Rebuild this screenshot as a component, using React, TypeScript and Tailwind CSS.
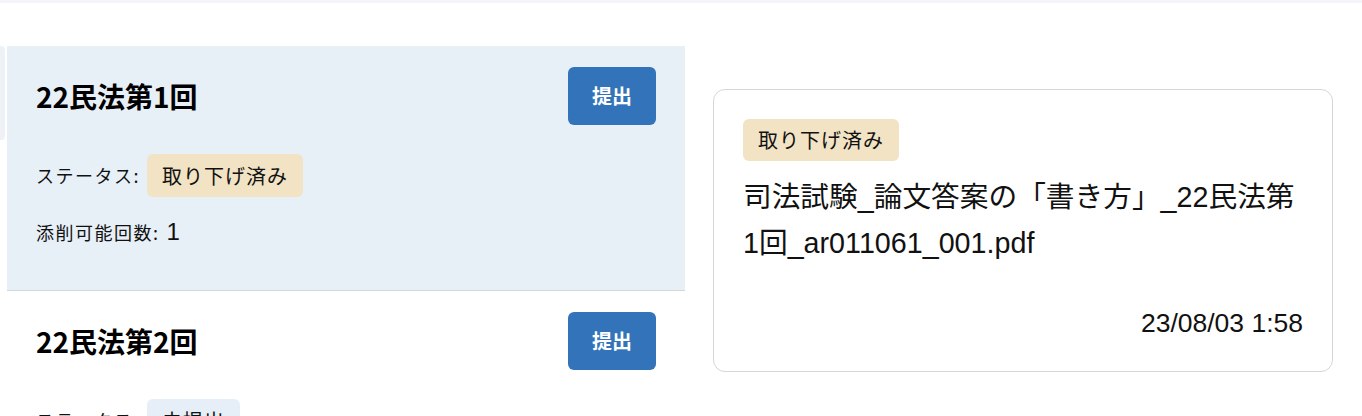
const jp = "font-['Noto_Sans_CJK_JP',sans-serif]";
const mixed = "font-['Liberation_Sans','Noto_Sans_CJK_JP',sans-serif]";

type Item = {
  title: string;
  status: string;
  badge: string;
  count?: number;
  active?: boolean;
};

const items: Item[] = [
  { title: "22民法第1回", status: "取り下げ済み", badge: "bg-[#f1e3c4]", count: 1, active: true },
  { title: "22民法第2回", status: "未提出", badge: "bg-[#e6eef7]", count: 1 },
];

function Row({ item }: { item: Item }) {
  return (
    <div className={`pl-[29px] pr-[29px] pt-[21px] pb-[40px] border-b border-[#d3d6da] ${item.active ? "bg-[#e7eff7]" : "bg-white"}`}>
      <div className="flex items-center justify-between">
        <h2 className={`${jp} text-[28px] font-bold text-black`}>{item.title}</h2>
        <button className={`${jp} w-[88px] h-[58px] rounded-[6px] bg-[#3273b9] text-white text-[20px] font-bold`}>提出</button>
      </div>
      <div className="mt-[29px] flex items-center">
        <span className={`${jp} text-[18px] tracking-[1.5px] text-[#111] mr-[7px]`}>ステータス:</span>
        <span className={`${jp} ${item.badge} rounded-[6px] h-[43px] px-[15px] flex items-center text-[20px] tracking-[1px] text-[#111]`}>{item.status}</span>
      </div>
      <div className="mt-[17px] flex items-baseline">
        <span className={`${jp} text-[18px] tracking-[1.5px] text-[#111]`}>添削可能回数:</span>
        <span className={`${mixed} text-[24px] text-[#111] ml-[7px]`}>{item.count}</span>
      </div>
    </div>
  );
}

export default function App() {
  return (
    <div className="w-[1362px] h-[416px] overflow-hidden bg-white">
      <div className="h-[3px] bg-[#f3f5f8]" />
      <div className="flex pt-[43px]">
        <div className="w-[7px] shrink-0">
          <div className="h-[94px] w-[5px] rounded-r-[4px] bg-[#eef2f7]" />
        </div>
        <div className="w-[678px] shrink-0">
          {items.map((it) => (
            <Row key={it.title} item={it} />
          ))}
        </div>
        <div className="ml-[28px] mt-[43px] w-[620px] h-[283px] rounded-[12px] border border-[#d6d6d6] px-[29px] pt-[29px] flex flex-col">
          <span className={`${jp} self-start bg-[#f1e3c4] rounded-[6px] h-[42px] px-[15px] flex items-center text-[20px] tracking-[1px] text-[#111]`}>取り下げ済み</span>
          <p className={`${mixed} mt-[13px] max-w-[558px] text-[28.7px] leading-[46px] text-[#111]`}>
            司法試験_論文答案の「書き方」_22民法第1回_ar011061_001.pdf
          </p>
          <div className={`${mixed} mt-auto mb-[27px] text-right text-[26.5px] text-[#111]`}>23/08/03 1:58</div>
        </div>
      </div>
    </div>
  );
}
